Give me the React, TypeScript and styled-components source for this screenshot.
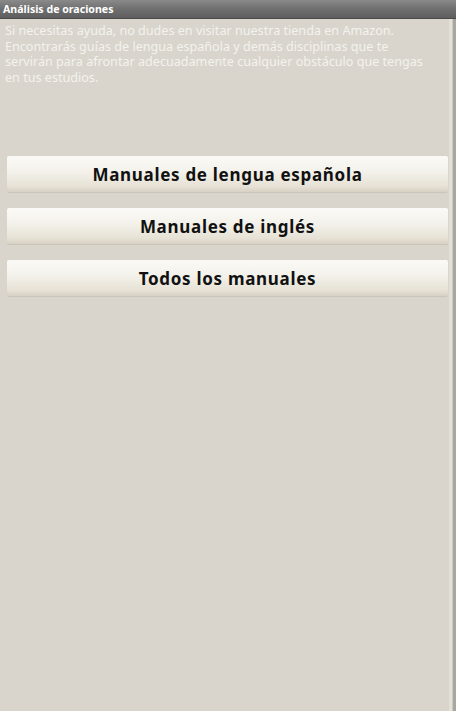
import React from "react"
import styled, { createGlobalStyle } from "styled-components"

const GlobalStyle = createGlobalStyle`
  html, body {
    margin: 0;
    padding: 0;
    background: #d9d5cc;
  }
  body {
    font-family: "Noto Sans", "Open Sans", sans-serif;
  }
`

const links = ["Manuales de lengua española", "Manuales de inglés", "Todos los manuales"]

export default function App() {
  return (
    <>
      <GlobalStyle />
      <S.Screen>
        <S.TitleBar>Análisis de oraciones</S.TitleBar>
        <S.Body>
          <S.Content>
            <S.Intro>
              Si necesitas ayuda, no dudes en visitar nuestra tienda en Amazon.
              <br />
              Encontrarás guías de lengua española y demás disciplinas que te
              <br />
              servirán para afrontar adecuadamente cualquier obstáculo que tengas
              <br />
              en tus estudios.
            </S.Intro>
            <S.ButtonList>
              {links.map((label) => (
                <S.Button key={label}>{label}</S.Button>
              ))}
            </S.ButtonList>
          </S.Content>
          <S.Edge />
        </S.Body>
      </S.Screen>
    </>
  )
}

const S = {
  Screen: styled.div`
    display: flex;
    flex-direction: column;
    width: 456px;
    height: 711px;
    overflow: hidden;
  `,
  TitleBar: styled.div`
    height: 18px;
    line-height: 18px;
    padding-left: 3px;
    color: #fff;
    font-size: 10.6px;
    font-weight: 700;
    background: linear-gradient(#8a8a8a, #6f6f6f 50%, #5e5e5e);
    border-bottom: 1px solid #4a4a4a;
  `,
  Body: styled.div`
    flex: 1;
    display: flex;
  `,
  Content: styled.div`
    flex: 1;
    display: flex;
    flex-direction: column;
  `,
  Intro: styled.p`
    margin: 4px 0 0;
    padding: 0 4px 0 5px;
    color: #f4f2ec;
    font-size: 12.6px;
    line-height: 15.5px;
    white-space: nowrap;
  `,
  ButtonList: styled.div`
    display: flex;
    flex-direction: column;
    gap: 16px;
    margin-top: 71px;
    padding: 0 1px 0 7px;
  `,
  Button: styled.button`
    height: 36px;
    padding-top: 2px;
    border: none;
    border-radius: 2px;
    color: #111;
    font-family: "Noto Sans", "Open Sans", sans-serif;
    font-size: 17px;
    font-weight: 700;
    letter-spacing: 0.7px;
    background: linear-gradient(#fbfaf6, #f3f1ea 45%, #e6e1d4 85%, #d6d1c3);
    box-shadow: 0 1px 0 #c9c5ba;
  `,
  Edge: styled.div`
    width: 7px;
    background: linear-gradient(90deg, #e3e0d8 0 3px, #cdcac1 3px 4px, #a9a69e 4px);
  `,
}
